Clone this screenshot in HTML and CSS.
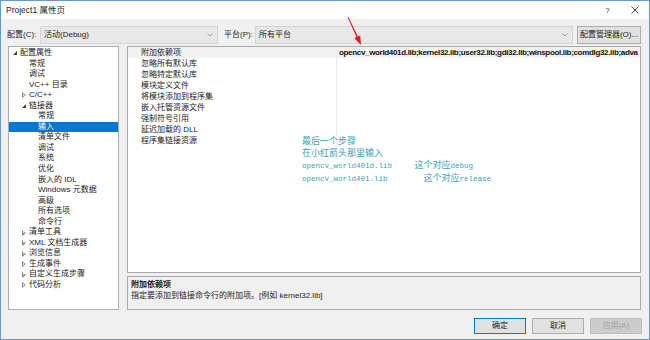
FILE: index.html
```html
<!DOCTYPE html>
<html lang="zh">
<head>
    <meta charset="UTF-8">
    <title>Project1 属性页</title>
    <link rel="stylesheet" href="styles.css">
</head>
<body>
<div class="window">
    <div class="titlebar">
        <span class="title">Project1 属性页</span>
        <span class="tb-btns">
            <span class="tb-btn">?</span>
            <span class="tb-btn">
                <svg width="8" height="8" viewBox="0 0 8 8"><path d="M0.5 0.5 L7.5 7.5 M7.5 0.5 L0.5 7.5" stroke="#333" stroke-width="0.9"/></svg>
            </span>
        </span>
    </div>

    <div class="config-row">
        <span class="lbl lbl-config">配置(C):</span>
        <div class="combo combo-config">
            <span>活动(Debug)</span>
            <svg class="chev" width="6" height="4" viewBox="0 0 6 4"><path d="M0.5 0.5 L3 3 L5.5 0.5" fill="none" stroke="#888" stroke-width="0.8"/></svg>
        </div>
        <span class="lbl lbl-platform">平台(P):</span>
        <div class="combo combo-platform">
            <span>所有平台</span>
            <svg class="chev" width="6" height="4" viewBox="0 0 6 4"><path d="M0.5 0.5 L3 3 L5.5 0.5" fill="none" stroke="#888" stroke-width="0.8"/></svg>
        </div>
        <button class="btn btn-manager">配置管理器(O)...</button>
    </div>

    <div class="main">
        <div class="tree">
            <div class="node l0"><span class="tw open"></span>配置属性</div>
            <div class="node l1"><span class="tw"></span>常规</div>
            <div class="node l1"><span class="tw"></span>调试</div>
            <div class="node l1"><span class="tw"></span>VC++ 目录</div>
            <div class="node l1"><span class="tw shut"></span>C/C++</div>
            <div class="node l1"><span class="tw open"></span>链接器</div>
            <div class="node l2"><span class="tw"></span>常规</div>
            <div class="node l2 selected"><span class="tw"></span>输入</div>
            <div class="node l2"><span class="tw"></span>清单文件</div>
            <div class="node l2"><span class="tw"></span>调试</div>
            <div class="node l2"><span class="tw"></span>系统</div>
            <div class="node l2"><span class="tw"></span>优化</div>
            <div class="node l2"><span class="tw"></span>嵌入的 IDL</div>
            <div class="node l2"><span class="tw"></span>Windows 元数据</div>
            <div class="node l2"><span class="tw"></span>高级</div>
            <div class="node l2"><span class="tw"></span>所有选项</div>
            <div class="node l2"><span class="tw"></span>命令行</div>
            <div class="node l1"><span class="tw shut"></span>清单工具</div>
            <div class="node l1"><span class="tw shut"></span>XML 文档生成器</div>
            <div class="node l1"><span class="tw shut"></span>浏览信息</div>
            <div class="node l1"><span class="tw shut"></span>生成事件</div>
            <div class="node l1"><span class="tw shut"></span>自定义生成步骤</div>
            <div class="node l1"><span class="tw shut"></span>代码分析</div>
        </div>

        <div class="right">
            <div class="grid">
                <div class="prop current"><div class="name">附加依赖项</div><div class="value">opencv_world401d.lib;kernel32.lib;user32.lib;gdi32.lib;winspool.lib;comdlg32.lib;adva</div></div>
                <div class="prop"><div class="name">忽略所有默认库</div><div class="value"></div></div>
                <div class="prop"><div class="name">忽略特定默认库</div><div class="value"></div></div>
                <div class="prop"><div class="name">模块定义文件</div><div class="value"></div></div>
                <div class="prop"><div class="name">将模块添加到程序集</div><div class="value"></div></div>
                <div class="prop"><div class="name">嵌入托管资源文件</div><div class="value"></div></div>
                <div class="prop"><div class="name">强制符号引用</div><div class="value"></div></div>
                <div class="prop"><div class="name">延迟加载的 DLL</div><div class="value"></div></div>
                <div class="prop"><div class="name">程序集链接资源</div><div class="value"></div></div>
            </div>
            <div class="desc">
                <div class="desc-title">附加依赖项</div>
                <div>指定要添加到链接命令行的附加项。[例如 kernel32.lib]</div>
            </div>
        </div>
    </div>

    <div class="buttons">
        <button class="btn btn-ok">确定</button>
        <button class="btn">取消</button>
        <button class="btn btn-disabled">应用(A)</button>
    </div>

    <!-- annotation drawn over the dialog -->
    <svg class="red-arrow" width="650" height="340" viewBox="0 0 650 340">
        <polygon points="348.4,16.8 357.9,36.5 360.2,35.4 361,45 354.3,38.2 356.5,37.1 347.6,17.2" fill="#e8191e"/>
    </svg>
    <div class="note">最后一个步骤
在小红箭头那里输入
<span class="m">opencv_world401d.lib     </span>这个对应<span class="m">debug</span>
<span class="m">opencv_world401.lib        </span>这个对应<span class="m">release</span></div>
</div>
</body>
</html>
```

FILE: styles.css
```css
html, body {
    margin: 0;
    padding: 0;
    width: 650px;
    height: 340px;
    overflow: hidden;
}
.window {
    position: relative;
    width: 650px;
    height: 340px;
    box-sizing: border-box;
    border: 1px solid #5a9bd8;
    background: #f0f0f0;
    font-family: "Liberation Sans", "Noto Sans CJK SC", sans-serif;
    font-size: 8px;
    color: #1e1e1e;
    display: flex;
    flex-direction: column;
}
.titlebar {
    height: 18px;
    background: #fff;
    display: flex;
    align-items: center;
    justify-content: space-between;
    padding-left: 5px;
    padding-right: 1px;
}
.title {
    font-size: 8.5px;
    line-height: 10px;
}
.tb-btns {
    display: flex;
}
.tb-btn {
    width: 27px;
    height: 18px;
    display: flex;
    align-items: center;
    justify-content: center;
    font-size: 8px;
    color: #333;
}
.config-row {
    display: flex;
    align-items: center;
    height: 18px;
    margin-top: 7px;
    padding: 0 8px 0 6px;
}
.lbl {
    line-height: 10px;
    flex: none;
}
.lbl-config {
    width: 33px;
}
.lbl-platform {
    width: 31px;
    margin-left: 6px;
}
.combo {
    height: 18px;
    flex: none;
    box-sizing: border-box;
    border: 1px solid #d4d4d4;
    background: #e8e8e8;
    display: flex;
    align-items: center;
    justify-content: space-between;
    padding: 0 4px 0 3px;
    line-height: 10px;
}
.combo-config {
    width: 178px;
}
.combo-platform {
    width: 318px;
}
.chev {
    display: block;
}
.btn {
    font-family: "Liberation Sans", "Noto Sans CJK SC", sans-serif;
    font-size: 8px;
    line-height: 10px;
    color: #1e1e1e;
    background: #e1e1e1;
    border: 1px solid #adadad;
    padding: 0;
    margin: 0;
    box-sizing: border-box;
    flex: none;
}
.btn-manager {
    width: 64px;
    height: 18px;
    margin-left: 4px;
}
.main {
    display: flex;
    gap: 8px;
    height: 264px;
    margin-top: 2px;
    padding: 0 8px 0 7px;
}
.tree {
    width: 111px;
    flex: none;
    box-sizing: border-box;
    border: 1px solid #acacac;
    background: #fff;
    padding-top: 1px;
}
.node {
    display: flex;
    align-items: center;
    height: 10.55px;
    line-height: 10.55px;
    white-space: nowrap;
    color: #222;
}
.node.l0 { padding-left: 2px; }
.node.l1 { padding-left: 11px; }
.node.l2 { padding-left: 20px; }
.node.selected {
    background: #0078d7;
    color: #fff;
}
.tw {
    width: 9px;
    height: 8px;
    flex: none;
    position: relative;
}
.tw.open::before {
    content: "";
    position: absolute;
    left: 2px;
    top: 2px;
    width: 0;
    height: 0;
    border-style: solid;
    border-width: 0 0 4px 4px;
    border-color: transparent transparent #404040 transparent;
}
.tw.shut::before {
    content: "";
    position: absolute;
    left: 2px;
    top: 1px;
    width: 0;
    height: 0;
    border-style: solid;
    border-width: 3px 0 3px 4px;
    border-color: transparent transparent transparent #8a8a8a;
}
.tw.shut::after {
    content: "";
    position: absolute;
    left: 2.8px;
    top: 2.3px;
    width: 0;
    height: 0;
    border-style: solid;
    border-width: 1.7px 0 1.7px 2.2px;
    border-color: transparent transparent transparent #fff;
}
.right {
    flex: 1;
    min-width: 0;
    display: flex;
    flex-direction: column;
}
.grid {
    height: 227px;
    box-sizing: border-box;
    border: 1px solid #a9a9a9;
    background: #fff;
    overflow: hidden;
}
.prop {
    display: flex;
    height: 11px;
    line-height: 11px;
}
.prop.current {
    background: #f2f2f2;
}
.prop .name {
    width: 195px;
    flex: none;
    padding-left: 13px;
    border-right: 1px solid #eaeaea;
    white-space: nowrap;
    color: #222;
}
.prop .value {
    flex: 1;
    min-width: 0;
    padding-left: 2px;
    white-space: nowrap;
    overflow: hidden;
    font-weight: bold;
    font-size: 8px;
    letter-spacing: -0.33px;
    color: #111;
}
.desc {
    height: 34px;
    margin-top: 3px;
    box-sizing: border-box;
    border: 1px solid #a9a9a9;
    padding: 3px 0 0 3px;
    line-height: 10.5px;
    color: #222;
}
.desc-title {
    font-weight: bold;
}
.buttons {
    display: flex;
    justify-content: flex-end;
    gap: 6px;
    height: 16px;
    margin-top: 8px;
    padding-right: 7px;
}
.buttons .btn {
    width: 52px;
    height: 16px;
}
.btn-ok {
    border-color: #0078d7;
}
.btn-disabled {
    background: #cccccc;
    border-color: #bfbfbf;
    color: #a0a0a0;
}
.red-arrow {
    position: absolute;
    left: -1px;
    top: -1px;
    pointer-events: none;
}
.note {
    position: absolute;
    left: 301px;
    top: 134px;
    font-family: "Noto Sans CJK SC", sans-serif;
    font-size: 9px;
    line-height: 12px;
    color: #37a3b6;
    white-space: pre;
}
.note .m {
    font-family: "Liberation Mono", monospace;
    font-size: 7.5px;
}
```
